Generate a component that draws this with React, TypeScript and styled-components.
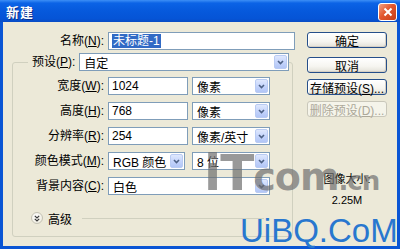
import React from "react";
import styled, { createGlobalStyle, css } from "styled-components";

const GlobalStyle = createGlobalStyle`
  html, body { margin: 0; padding: 0; background: #ffffff; }
  body {
    font-family: "Liberation Sans", "Noto Sans CJK SC", sans-serif;
    font-size: 12px;
    color: #000;
  }
  * { box-sizing: border-box; }
`;

const Window = styled.div`
  position: relative;
  width: 400px;
  height: 249px;
  display: flex;
  flex-direction: column;
  background: #0a55d4;
  overflow: hidden;
`;

const TitleBar = styled.div`
  height: 22px;
  flex: none;
  display: flex;
  align-items: center;
  justify-content: space-between;
  padding: 0 3px 0 6px;
  background: linear-gradient(180deg, #3d8ff6 0%, #0b63e6 14%, #0659dc 50%, #0554d6 85%, #0a4cc4 100%);
`;

const Title = styled.span`
  color: #fff;
  font-weight: bold;
  font-size: 13px;
  letter-spacing: 1px;
  text-shadow: 1px 1px 0 #0a2f8a;
`;

const CloseButton = styled.div`
  width: 19px;
  height: 18px;
  margin-top: 1px;
  border: 1px solid #fff;
  border-radius: 3px;
  background: linear-gradient(135deg, #f2a184 0%, #e2572e 45%, #c83d17 100%);
  display: flex;
  align-items: center;
  justify-content: center;
`;

const Body = styled.div`
  flex: 1;
  margin: 0 3px 3px;
  background: #ece9d8;
  display: flex;
  gap: 12px;
  padding: 10px 0 0 9px;
`;

const Main = styled.div`
  width: 283px;
  display: flex;
  flex-direction: column;
`;

const NameRow = styled.div`
  display: grid;
  grid-template-columns: 92px 187px;
  column-gap: 4px;
  height: 18px;
`;

const Label = styled.span`
  text-align: right;
  white-space: nowrap;
  line-height: 18px;
  font-size: 12px;
`;

const fieldBox = css`
  height: 18px;
  border: 1px solid #7f9db9;
  background: #fff;
  display: flex;
  align-items: center;
  white-space: nowrap;
  font-size: 12px;
`;

const TextField = styled.div`
  ${fieldBox};
  padding-left: 3px;
`;

const Highlight = styled.span`
  background: #316ac5;
  color: #fff;
  line-height: 14px;
  padding: 0 1px;
`;

const SelectBox = styled.div<{ $w?: number; $span?: boolean }>`
  ${fieldBox};
  padding: 0 1px 0 4px;
  justify-content: space-between;
  ${(p) => (p.$w ? `width: ${p.$w}px;` : "")}
  ${(p) => (p.$span ? "grid-column: 2 / 4;" : "")}
`;

const ArrowButton = styled.div`
  width: 13px;
  height: 14px;
  border: 1px solid #b9cbf3;
  border-radius: 2px;
  background: linear-gradient(180deg, #dfe8fd 0%, #c3d3fb 55%, #b2c6f6 100%);
  display: flex;
  align-items: center;
  justify-content: center;
`;

const Group = styled.div`
  margin-top: 12px;
  width: 281px;
  height: 175px;
  border: 1px solid #d0d0bf;
  border-radius: 3px;
  display: flex;
  flex-direction: column;
`;

const LegendRow = styled.div`
  align-self: flex-start;
  display: flex;
  align-items: center;
  gap: 4px;
  height: 18px;
  margin: -10px 0 0 15px;
  padding: 0 0 0 4px;
  background: #ece9d8;
`;

const FormGrid = styled.div`
  margin-top: 6px;
  display: grid;
  grid-template-columns: 91px 80px 78px;
  column-gap: 4px;
  grid-auto-rows: 18px;
  row-gap: 7px;
`;

const AdvancedRow = styled.div`
  margin-top: 17px;
  padding-left: 18px;
  height: 12px;
  display: flex;
  align-items: center;
  gap: 5px;
`;

const RoundToggle = styled.div`
  width: 12px;
  height: 12px;
  border-radius: 50%;
  border: 1px solid #c4c2b4;
  background: radial-gradient(circle at 40% 35%, #ffffff 0%, #f1efe4 70%, #dedbc9 100%);
  display: flex;
  align-items: center;
  justify-content: center;
`;

const Rule = styled.div`
  flex: 1;
  height: 1px;
  background: #d0d0bf;
  margin: 0 28px 0 5px;
`;

const Side = styled.div`
  width: 80px;
  display: flex;
  flex-direction: column;
`;

const Button = styled.div<{ $disabled?: boolean; $gapAfter?: number }>`
  height: 16px;
  border-radius: 3px;
  display: flex;
  align-items: center;
  justify-content: center;
  font-size: 12px;
  white-space: nowrap;
  margin-bottom: ${(p) => p.$gapAfter ?? 0}px;
  ${(p) =>
    p.$disabled
      ? css`
          border: 1px solid #c9c7ba;
          background: #f5f4ea;
          color: #aca899;
        `
      : css`
          border: 1px solid #264f8a;
          background: linear-gradient(180deg, #ffffff 0%, #f6f5f0 60%, #e3e1d8 100%);
          box-shadow: inset -1px -1px 0 #d6d0c5, inset 1px 1px 0 #fff;
          color: #000;
        `}
`;

const Info = styled.div`
  margin-top: 55px;
  display: flex;
  flex-direction: column;
  align-items: center;
  gap: 7px;
  font-size: 11px;
  line-height: 14px;
`;

const WatermarkGray = styled.div`
  position: absolute;
  left: 204px;
  top: 148px;
  font-family: "DejaVu Sans", sans-serif;
  font-weight: bold;
  color: rgba(110, 110, 110, 0.7);
  white-space: nowrap;
  line-height: 1;
  pointer-events: none;
  letter-spacing: -1px;
`;

const WmPart = styled.span<{ $size: number }>`
  font-size: ${(p) => p.$size}px;
`;

const WatermarkBlue = styled.div`
  position: absolute;
  left: 240px;
  top: 214px;
  font-family: "Liberation Sans", sans-serif;
  font-size: 33px;
  line-height: 1;
  color: #2877cf;
  white-space: nowrap;
  pointer-events: none;
`;

const Chevron = () => (
  <svg width="7" height="5" viewBox="0 0 7 5">
    <path d="M1 1 L3.5 3.5 L6 1" stroke="#4d6185" strokeWidth="1.6" fill="none" />
  </svg>
);

const Select: React.FC<{ children: React.ReactNode; w?: number; span?: boolean }> = ({ children, w, span }) => (
  <SelectBox $w={w} $span={span}>
    <span>{children}</span>
    <ArrowButton>
      <Chevron />
    </ArrowButton>
  </SelectBox>
);

const rows: { label: React.ReactNode; value: string; unit: string }[] = [
  { label: <>宽度(<u>W</u>):</>, value: "1024", unit: "像素" },
  { label: <>高度(<u>H</u>):</>, value: "768", unit: "像素" },
  { label: <>分辨率(<u>R</u>):</>, value: "254", unit: "像素/英寸" },
];

export default function App() {
  return (
    <>
      <GlobalStyle />
      <Window>
        <TitleBar>
          <Title>新建</Title>
          <CloseButton>
            <svg width="10" height="10" viewBox="0 0 10 10">
              <path d="M1.5 1.5 L8.5 8.5 M8.5 1.5 L1.5 8.5" stroke="#fff" strokeWidth="2" />
            </svg>
          </CloseButton>
        </TitleBar>
        <Body>
          <Main>
            <NameRow>
              <Label>
                名称(<u>N</u>):
              </Label>
              <TextField>
                <Highlight>未标题-1</Highlight>
              </TextField>
            </NameRow>
            <Group>
              <LegendRow>
                <Label>
                  预设(<u>P</u>):
                </Label>
                <Select w={210}>自定</Select>
              </LegendRow>
              <FormGrid>
                {rows.map((r, i) => (
                  <React.Fragment key={i}>
                    <Label>{r.label}</Label>
                    <TextField>{r.value}</TextField>
                    <Select>{r.unit}</Select>
                  </React.Fragment>
                ))}
                <Label>
                  颜色模式(<u>M</u>):
                </Label>
                <Select w={77}>RGB 颜色</Select>
                <Select>8 位</Select>
                <Label>
                  背景内容(<u>C</u>):
                </Label>
                <Select span>白色</Select>
              </FormGrid>
              <AdvancedRow>
                <RoundToggle>
                  <svg width="6" height="7" viewBox="0 0 6 7">
                    <path d="M0.8 0.8 L3 3 L5.2 0.8 M0.8 3.8 L3 6 L5.2 3.8" stroke="#3a3a3a" strokeWidth="1.2" fill="none" />
                  </svg>
                </RoundToggle>
                <span>高级</span>
                <Rule />
              </AdvancedRow>
            </Group>
          </Main>
          <Side>
            <Button $gapAfter={9}>确定</Button>
            <Button $gapAfter={6}>取消</Button>
            <Button $gapAfter={6}>
              <span>
                存储预设(<u>S</u>)...
              </span>
            </Button>
            <Button $disabled>
              <span>
                删除预设(<u>D</u>)...
              </span>
            </Button>
            <Info>
              <span>图像大小:</span>
              <span>2.25M</span>
            </Info>
          </Side>
        </Body>
        <WatermarkGray>
          <WmPart $size={50}>iT</WmPart>
          <WmPart $size={38}>com</WmPart>
          <WmPart $size={26}>.cn</WmPart>
        </WatermarkGray>
        <WatermarkBlue>UiBQ.CoM</WatermarkBlue>
      </Window>
    </>
  );
}
